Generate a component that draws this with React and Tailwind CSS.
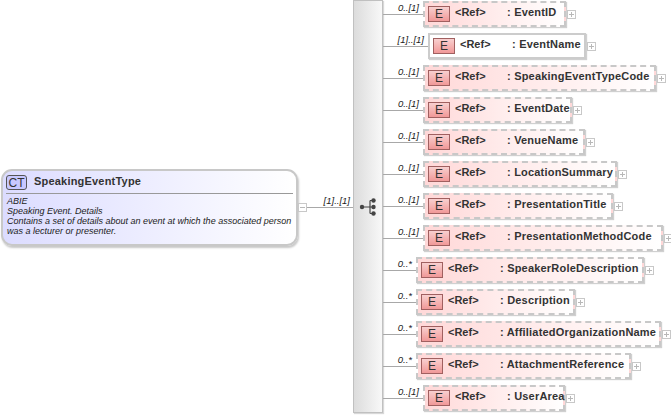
const ROWS = [
  { card: '0..[1]', name: 'EventID', left: 'w-[40px]', width: 'w-[143px]', dashed: true },
  { card: '[1]..[1]', name: 'EventName', left: 'w-[45px]', width: 'w-[158px]', dashed: false },
  { card: '0..[1]', name: 'SpeakingEventTypeCode', left: 'w-[40px]', width: 'w-[233px]', dashed: true },
  { card: '0..[1]', name: 'EventDate', left: 'w-[40px]', width: 'w-[149px]', dashed: true },
  { card: '0..[1]', name: 'VenueName', left: 'w-[40px]', width: 'w-[162px]', dashed: true },
  { card: '0..[1]', name: 'LocationSummary', left: 'w-[40px]', width: 'w-[194px]', dashed: true },
  { card: '0..[1]', name: 'PresentationTitle', left: 'w-[40px]', width: 'w-[190px]', dashed: true },
  { card: '0..[1]', name: 'PresentationMethodCode', left: 'w-[40px]', width: 'w-[240px]', dashed: true },
  { card: '0..*', name: 'SpeakerRoleDescription', left: 'w-[33px]', width: 'w-[228px]', dashed: true },
  { card: '0..*', name: 'Description', left: 'w-[33px]', width: 'w-[159px]', dashed: true },
  { card: '0..*', name: 'AffiliatedOrganizationName', left: 'w-[33px]', width: 'w-[245px]', dashed: true },
  { card: '0..*', name: 'AttachmentReference', left: 'w-[33px]', width: 'w-[215px]', dashed: true },
  { card: '0..[1]', name: 'UserArea', left: 'w-[40px]', width: 'w-[142px]', dashed: true },
]

function Toggle({ open }) {
  return (
    <div className="relative w-[9px] h-[9px] shrink-0 border border-[#c8c8c8] bg-white">
      <div className="absolute left-[1px] right-[1px] top-[3px] h-px bg-[#b8b8b8]" />
      {!open && <div className="absolute top-[1px] bottom-[1px] left-[3px] w-px bg-[#b8b8b8]" />}
    </div>
  )
}

function Row({ row }) {
  return (
    <div className="flex items-start h-[32px]">
      <div className={`relative h-[25px] shrink-0 ${row.left}`}>
        <div className="absolute left-0 right-0 top-[13px] h-px bg-[#a8a8a8]" />
        <span className="absolute right-[4px] top-[2px] text-[9.5px] leading-[10px] italic text-[#222]">{row.card}</span>
      </div>
      <div
        className={`flex items-center h-[26px] shrink-0 pl-[3px] border-2 shadow-[1px_1px_1px_#d0d0d0] ${row.width} ${
          row.dashed
            ? 'border-dashed border-[#c8c8c8] bg-gradient-to-r from-[#ffd8d8] to-white'
            : 'border-solid border-[#cccccc] bg-white'
        }`}
      >
        <div className="flex items-center justify-center w-[22px] h-[16px] shrink-0 border border-[#a06060] bg-gradient-to-b from-[#f8d0d0] to-[#f09898] text-[12px] text-[#333]">
          E
        </div>
        <span className="ml-[5px] mb-[3px] w-[52px] shrink-0 text-[11px] font-bold text-[#333]">&lt;Ref&gt;</span>
        <span className="mb-[3px] text-[11px] font-bold tracking-[0.2px] whitespace-nowrap text-[#333]">: {row.name}</span>
      </div>
      <div className="mt-[9px] ml-px">
        <Toggle />
      </div>
    </div>
  )
}

function SequenceIcon() {
  return (
    <svg width="18" height="20" viewBox="0 0 18 20" className="text-[#444]">
      <path d="M2 10H11M11 3.500V16.500M11 3.500H15M11 10H15M11 16.500H15" stroke="currentColor" strokeWidth="1.2" fill="none" />
      <circle cx="3" cy="10" r="2.2" fill="currentColor" />
      <circle cx="14.500" cy="3.500" r="2.2" fill="currentColor" />
      <circle cx="14.500" cy="10" r="2.2" fill="currentColor" />
      <circle cx="14.500" cy="16.500" r="2.2" fill="currentColor" />
    </svg>
  )
}

export default function App() {
  return (
    <div className="flex w-[671px] h-[417px] overflow-hidden bg-white font-['Liberation_Sans',Arial,sans-serif]">
      {/* Complex type + connector */}
      <div className="flex items-center h-[414px] shrink-0 pl-px">
        <div className="w-[297px] h-[77px] shrink-0 px-[3px] pt-[3px] rounded-[11px] border-2 border-[#c8c8c8] bg-gradient-to-r from-[#dcdcff] to-white shadow-[1px_2px_2px_#c8c8c8]">
          <div className="flex items-center h-[20px] pb-[1px] border-b border-[#999]">
            <div className="flex items-center justify-center w-[21px] h-[15px] rounded-[3px] border border-[#555] bg-[#c8c8ff] text-[12px] text-[#333]">
              CT
            </div>
            <span className="ml-[7px] mb-[3px] text-[11px] font-bold tracking-[0.2px] text-[#333]">SpeakingEventType</span>
          </div>
          <div className="pl-px pt-[2px] text-[9px] leading-[10.3px] italic text-[#222]">
            <div>ABIE</div>
            <div>Speaking Event. Details</div>
            <div className="whitespace-nowrap">Contains a set of details about an event at which the associated person</div>
            <div>was a lecturer or presenter.</div>
          </div>
        </div>
        <Toggle open />
        <div className="relative w-[46px] h-px shrink-0 bg-[#a8a8a8]">
          <span className="absolute right-[3px] bottom-[2px] text-[9.5px] leading-[10px] italic whitespace-nowrap text-[#222]">[1]..[1]</span>
        </div>
      </div>

      {/* Sequence spine */}
      <div className="flex items-center justify-center w-[30px] h-[413px] shrink-0 border border-[#c0c0c0] bg-gradient-to-r from-[#dcdcdc] to-[#f8f8f8] shadow-[1px_1px_1px_#d8d8d8]">
        <SequenceIcon />
      </div>

      {/* Elements */}
      <div className="flex flex-col pt-px">
        {ROWS.map(row => (
          <Row key={row.name} row={row} />
        ))}
      </div>
    </div>
  )
}
